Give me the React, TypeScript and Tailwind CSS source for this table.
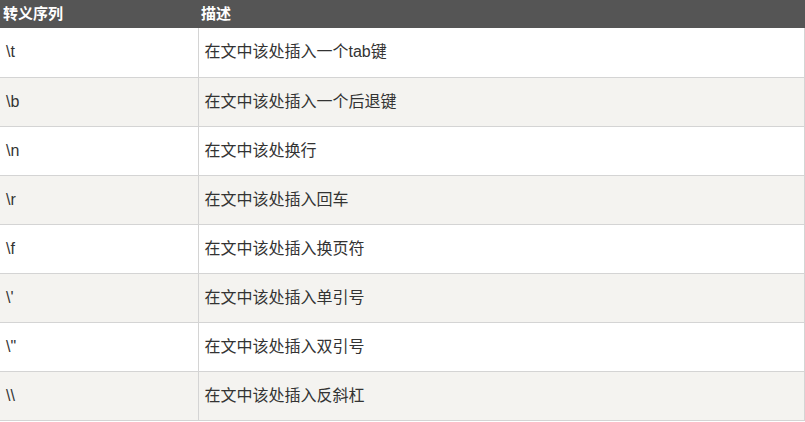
import React from "react";

const rows = [
  { seq: "\\t", desc: "在文中该处插入一个tab键" },
  { seq: "\\b", desc: "在文中该处插入一个后退键" },
  { seq: "\\n", desc: "在文中该处换行" },
  { seq: "\\r", desc: "在文中该处插入回车" },
  { seq: "\\f", desc: "在文中该处插入换页符" },
  { seq: "\\'", desc: "在文中该处插入单引号" },
  { seq: '\\"', desc: "在文中该处插入双引号" },
  { seq: "\\\\", desc: "在文中该处插入反斜杠" },
];

const App = () => {
  return (
    <div className="w-[805px] h-[422px] bg-white overflow-hidden font-['Liberation_Sans','Noto_Sans_CJK_SC',sans-serif] text-[16px] text-[#333]">
      <table className="w-[805px] border-collapse table-fixed">
        <thead>
          <tr className="h-[28px] bg-[#555] text-white font-bold text-left text-[15px]">
            <th className="w-[198px] pl-[3px] py-0 font-bold">转义序列</th>
            <th className="pl-[3px] py-0 font-bold">描述</th>
          </tr>
        </thead>
        <tbody>
          {rows.map((r, i) => (
            <tr
              key={i}
              className={`h-[49px] border-b border-[#d4d4d4] ${
                i % 2 === 1 ? "bg-[#f4f3f0]" : "bg-white"
              }`}
            >
              <td className="pl-[6px] border-r border-[#d4d4d4]">{r.seq}</td>
              <td className="pl-[6px] border-r border-[#d4d4d4]">{r.desc}</td>
            </tr>
          ))}
        </tbody>
      </table>
    </div>
  );
};

export default App;
